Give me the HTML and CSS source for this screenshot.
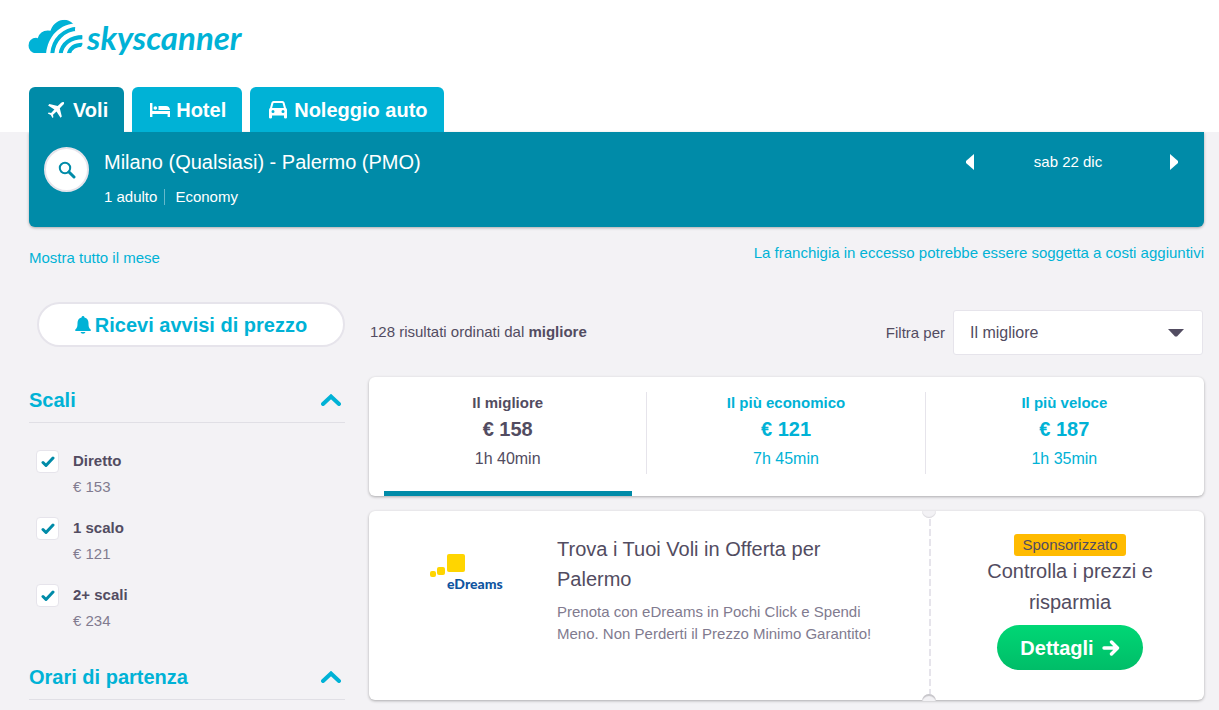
FILE: index.html
```html
<!DOCTYPE html>
<html lang="it">
<head>
<meta charset="utf-8">
<meta name="viewport" content="width=device-width, initial-scale=1">
<title>Skyscanner - Milano - Palermo</title>
<link rel="stylesheet" href="styles.css">
</head>
<body>
<header class="site-header">
  <a class="logo" href="#">
    <svg class="logo-mark" viewBox="26 26 164 104" aria-hidden="true">
      <defs>
        <clipPath id="cloud"><path d="M50 128A23 23 0 0 1 50 82Q53 82 55 83Q62 60 85 60Q90 60 93 61C101 36 121 28 135 28C151 30 160 38 167 47L166 61Q181 65 189 76L188 90L189 101L182 113L188 128Z"/></clipPath>
      </defs>
      <g clip-path="url(#cloud)">
        <path fill="#00b2d6" d="M26 26H190V38C120 33 86 78 80 128H26Z"/>
        <g fill="none" stroke="#00b2d6" stroke-width="12">
          <path d="M98 132C101 88 132 56 176 55"/>
          <path d="M123 132C126 100 153 78 196 80"/>
          <path d="M147 132C152 109 168 101 196 103"/>
        </g>
      </g>
    </svg>
    <span class="logo-text">skyscanner</span>
  </a>
  <nav class="tabs" aria-label="Prodotti">
    <a class="tab tab-active" href="#"><svg class="tab-icon" viewBox="0 0 18 18" aria-hidden="true"><path fill="currentColor" d="M16.800 1.200c.6.6.2 1.800-.6 2.600L12.800 7.200l2 8.300-1.300 1.300-4-6.300-3.500 3.300.4 2.400-.9.900-1.700-3L.8 12.400l.9-.9 2.400.4 3.300-3.500L1.100 4.400l1.300-1.300 8.300 2L14.200 1.800C15 1 16.200.6 16.800 1.200z"/></svg>Voli</a>
    <a class="tab" href="#"><svg class="tab-icon tab-icon-wide" viewBox="0 0 20 18" aria-hidden="true"><path fill="currentColor" d="M0 2h2.400v8H20v6h-2.400v-3H2.400v3H0z"/><path fill="currentColor" d="M8.500 5H16q3.500 0 4 4H8.500z"/><circle cx="5.300" cy="7" r="1.800" fill="currentColor"/></svg>Hotel</a>
    <a class="tab" href="#"><svg class="tab-icon tab-icon-wide" viewBox="0 0 20 18" aria-hidden="true"><path fill="currentColor" fill-rule="evenodd" d="M5.500 0h9q1.500 0 2 1.500l1.500 5.500q1 .5 1 2V16.500q0 1-1.500 1T16 16.500V14.500H4v2q0 1-1.500 1T1 16.500V9q0-1.500 1-2l1.500-5.500Q4 0 5.500 0zM5.500 2 4.100 7h11.800l-1.400-5zM5 9a1.500 1.500 0 1 0 0 3 1.500 1.500 0 0 0 0-3zm10 0a1.500 1.500 0 1 0 0 3 1.500 1.500 0 0 0 0-3z"/></svg>Noleggio auto</a>
  </nav>
</header>

<section class="search-panel">
  <button class="search-button" type="button" aria-label="Modifica ricerca"><svg width="18" height="18" viewBox="0 0 18 18" aria-hidden="true"><circle cx="7" cy="7" r="5.200" fill="none" stroke="#008ba8" stroke-width="2"/><path d="M11 11l5 5" stroke="#008ba8" stroke-width="3" stroke-linecap="round"/></svg></button>
  <div class="search-info">
    <h1 class="route">Milano (Qualsiasi) - Palermo (PMO)</h1>
    <p class="travellers"><span class="pax">1 adulto</span><span>Economy</span></p>
  </div>
  <div class="date-nav">
    <button class="date-arrow" type="button" aria-label="Giorno precedente"><svg width="8" height="16" viewBox="0 0 8 16" aria-hidden="true"><path fill="#fff" d="M8 0v16L0 9V7z"/></svg></button>
    <span class="date">sab 22 dic</span>
    <button class="date-arrow" type="button" aria-label="Giorno successivo"><svg width="8" height="16" viewBox="0 0 8 16" aria-hidden="true"><path fill="#fff" d="M0 0v16l8-7V7z"/></svg></button>
  </div>
</section>

<div class="links-row">
  <a class="month-link" href="#">Mostra tutto il mese</a>
  <a href="#">La franchigia in eccesso potrebbe essere soggetta a costi aggiuntivi</a>
</div>

<div class="columns">
  <aside class="sidebar">
    <button class="alert-button" type="button"><svg width="16" height="18" viewBox="0 0 16 18" aria-hidden="true"><path fill="#00b2d6" d="M8 0q1.300 0 1.500 1.400C12.300 2 13.500 4.500 13.500 7c0 4 .5 5 2.200 6.500V15H.3v-1.500C2 12 2.500 11 2.500 7c0-2.500 1.200-5 4-5.600Q6.700 0 8 0zM5.500 16h5Q10 17.800 8 17.800T5.500 16z"/></svg>Ricevi avvisi di prezzo</button>

    <section class="filter">
      <h2 class="filter-heading"><button class="filter-toggle" type="button">Scali<svg width="20" height="12" viewBox="0 0 20 12" aria-hidden="true"><path d="M2 10l8-7.500L18 10" fill="none" stroke="#00b2d6" stroke-width="4" stroke-linecap="round"/></svg></button></h2>
      <ul class="stops">
        <li class="stop">
          <span class="check"><input class="check-box" id="stop-0" type="checkbox" checked><svg class="check-mark" viewBox="0 0 14 12" aria-hidden="true"><path d="M2 6.500l3 3L12 2" /></svg></span>
          <label class="stop-label" for="stop-0"><strong>Diretto</strong><span class="stop-price">€ 153</span></label>
        </li>
        <li class="stop">
          <span class="check"><input class="check-box" id="stop-1" type="checkbox" checked><svg class="check-mark" viewBox="0 0 14 12" aria-hidden="true"><path d="M2 6.500l3 3L12 2" /></svg></span>
          <label class="stop-label" for="stop-1"><strong>1 scalo</strong><span class="stop-price">€ 121</span></label>
        </li>
        <li class="stop">
          <span class="check"><input class="check-box" id="stop-2" type="checkbox" checked><svg class="check-mark" viewBox="0 0 14 12" aria-hidden="true"><path d="M2 6.500l3 3L12 2" /></svg></span>
          <label class="stop-label" for="stop-2"><strong>2+ scali</strong><span class="stop-price">€ 234</span></label>
        </li>
      </ul>
    </section>
    <section class="filter">
      <h2 class="filter-heading"><button class="filter-toggle" type="button">Orari di partenza<svg width="20" height="12" viewBox="0 0 20 12" aria-hidden="true"><path d="M2 10l8-7.500L18 10" fill="none" stroke="#00b2d6" stroke-width="4" stroke-linecap="round"/></svg></button></h2>
    </section>
  </aside>

  <main class="results">
    <div class="results-bar">
      <p class="count">128 risultati ordinati dal <strong>migliore</strong></p>
      <label class="sort-label" for="sort">Filtra per</label>
      <span class="select-wrap">
        <select class="select" id="sort"><option>Il migliore</option><option>Il più economico</option><option>Il più veloce</option></select>
        <svg class="select-arrow" width="16" height="8" viewBox="0 0 16 8" aria-hidden="true"><path fill="#524c61" d="M0 0h16L9 7.500H7z"/></svg>
      </span>
    </div>

    <div class="card best">
      <button class="best-option best-current" type="button"><span class="best-body"><strong class="best-name">Il migliore</strong><strong class="best-price">€ 158</strong><span class="best-time">1h 40min</span></span></button>
      <button class="best-option" type="button"><span class="best-body"><strong class="best-name">Il più economico</strong><strong class="best-price">€ 121</strong><span class="best-time">7h 45min</span></span></button>
      <button class="best-option" type="button"><span class="best-body"><strong class="best-name">Il più veloce</strong><strong class="best-price">€ 187</strong><span class="best-time">1h 35min</span></span></button>
    </div>

    <article class="card ticket">
      <div class="partner">
        <svg width="36" height="26" viewBox="0 0 36 26" aria-hidden="true"><g fill="#ffd500"><rect x="17" y="1" width="18" height="18" rx="2"/><rect x="7" y="14" width="8" height="8" rx="2"/><rect x="0" y="18" width="6" height="6" rx="2"/></g></svg>
        <span class="partner-name">eDreams</span>
      </div>
      <div class="offer">
        <h3 class="offer-title">Trova i Tuoi Voli in Offerta per Palermo</h3>
        <p class="offer-text">Prenota con eDreams in Pochi Click e Spendi Meno. Non Perderti il Prezzo Minimo Garantito!</p>
      </div>
      <div class="stub">
        <span class="badge">Sponsorizzato</span>
        <p class="stub-text">Controlla i prezzi e risparmia</p>
        <a class="details" href="#">Dettagli<svg width="18" height="16" viewBox="0 0 18 16" aria-hidden="true"><path d="M2 8h13M9.500 2l6 6-6 6" fill="none" stroke="#fff" stroke-width="3.400" stroke-linecap="round" stroke-linejoin="round"/></svg></a>
      </div>
    </article>
  </main>
</div>
</body>
</html>
```

FILE: styles.css
```css
* { box-sizing: border-box; }
body {
  margin: 0;
  padding-bottom: 8px;
  background: #f3f2f5;
  color: #524c61;
  font: 15px/22px "Liberation Sans", Arial, sans-serif;
}
h1, h2, h3, p, ul { margin: 0; padding: 0; font-size: inherit; font-weight: inherit; }
ul { list-style: none; }
a { color: #00b2d6; text-decoration: none; }
button { border: 0; padding: 0; background: none; color: inherit; font: inherit; cursor: pointer; }
svg { display: block; flex: none; }

.site-header { background: #fff; padding: 19px 15px 0 28px; }
.logo { display: flex; align-items: flex-start; height: 40px; gap: 4px; }
.logo-mark { width: 55px; height: 35px; }
.logo-text { font: italic bold 33px/37px Lato, sans-serif; }
.tabs { display: flex; gap: 8px; margin: 28px 0 0 1px; }
.tab {
  display: flex; align-items: center; gap: 6px;
  height: 45px; padding: 0 16px 0 18px;
  border-radius: 6px 6px 0 0;
  background: #00b2d6; color: #fff;
  font-size: 20px; font-weight: bold;
}
.tab-active { background: #008ba8; gap: 8px; }
.tab-icon { width: 18px; height: 18px; }
.tab-icon-wide { width: 20px; }

.search-panel {
  display: flex; align-items: flex-start;
  min-height: 95px; margin: 0 15px 0 29px; padding: 15px;
  border-radius: 0 0 6px 6px;
  background: #008ba8; color: #fff;
  box-shadow: 0 1px 3px rgba(0, 0, 0, .3);
}
.search-button {
  display: grid; place-items: center;
  width: 45px; height: 45px;
  border: 2px solid #e6e4eb; border-radius: 50%;
  background: #fff;
}
.search-info { flex: 1; padding-left: 15px; }
.route { font-size: 20px; line-height: 30px; }
.travellers { display: flex; margin-top: 9px; }
.pax {
  padding-right: 8px; margin-right: 10px;
  background: linear-gradient(#66b9cb, #66b9cb) right center / 1px 16px no-repeat;
}
.date-nav { display: flex; align-items: center; justify-content: space-between; width: 212px; height: 30px; margin-right: 11px; }
.date { padding-right: 8px; }

.links-row { display: flex; justify-content: space-between; margin: 15px 15px 0 29px; }
.month-link { padding-top: 5px; }

.columns { display: flex; gap: 24px; margin: 33px 15px 0 29px; }
.sidebar { flex: 0 0 316px; }
.alert-button {
  display: flex; align-items: center; justify-content: center; gap: 4px;
  width: 308px; height: 45px; margin-left: 8px;
  border: 2px solid #e6e4eb; border-radius: 24px;
  background: #fff; color: #00b2d6;
  font-size: 20px; font-weight: bold;
}
.filter { padding-top: 30px; }
.filter + .filter { padding-top: 26px; }
.filter-heading { border-bottom: 1px solid #e0dfe5; }
.filter-toggle {
  display: flex; align-items: center; justify-content: space-between;
  width: 100%; height: 45px; padding: 0 4px 0 0;
  color: #00b2d6; font-size: 20px; font-weight: bold;
}
.stops { padding-top: 27px; }
.stop { display: flex; gap: 14px; padding: 0 0 23px 7px; }
.stop:last-child { padding-bottom: 0; }
.check { display: grid; width: 23px; height: 23px; }
.check-box {
  grid-area: 1 / 1; appearance: none;
  width: 23px; height: 23px; margin: 0;
  border: 1px solid #e6e4eb; border-radius: 4px; background: #fff;
}
.check-mark {
  grid-area: 1 / 1; place-self: center; width: 14px; height: 12px; pointer-events: none;
  fill: none; stroke: #008ba8; stroke-width: 3; stroke-linecap: round; stroke-linejoin: round;
  visibility: hidden;
}
.check-box:checked + .check-mark { visibility: visible; }
.stop-label { display: flex; flex-direction: column; margin-bottom: -4px; }
.stop-price { color: #817b8f; padding-top: 4px; }

.results { flex: 1; min-width: 0; }
.results-bar { display: flex; align-items: center; margin-top: 8px; padding: 0 1px; }
.count { flex: 1; padding-bottom: 2px; }
.sort-label { margin-right: 8px; }
.select-wrap { display: grid; width: 250px; }
.select {
  grid-area: 1 / 1; appearance: none;
  height: 45px; padding: 0 16px;
  border: 1px solid #e6e4eb; border-radius: 3px;
  background: #fff; color: inherit;
  font: 16px "Liberation Sans", Arial, sans-serif;
}
.select-arrow { grid-area: 1 / 1; place-self: center end; margin-right: 19px; pointer-events: none; }

.card { border-radius: 6px; background: #fff; box-shadow: 0 1px 3px rgba(0, 0, 0, .3); }
.best { display: grid; grid-template-columns: repeat(3, 1fr); margin-top: 22px; }
.best-option { padding-top: 15px; color: #00b2d6; }
.best-option::after { content: ""; display: block; height: 5px; margin: 17px 15px 0; }
.best-current { color: #524c61; }
.best-current::after { background: #008ba8; }
.best-body { display: grid; border-right: 1px solid #e6e4eb; }
.best-option:last-child .best-body { border-color: transparent; }
.best-price { font-size: 20px; line-height: 30px; }
.best-time { font-size: 16px; line-height: 30px; }

.ticket { display: flex; min-height: 189px; margin-top: 15px; position: relative; }
.partner { flex: 0 0 188px; padding: 42px 0 0 61px; }
.partner-name { display: block; margin: -4px 0 0 17px; color: #0f559f; font: 900 14px/18px Lato, sans-serif; }
.offer { flex: 1; padding: 23px 45px 0 0; }
.offer-title { font-size: 20px; line-height: 30px; }
.offer-text { margin-top: 7px; color: #817b8f; }
.stub {
  display: flex; flex-direction: column; align-items: center;
  flex: 0 0 275px; padding: 23px 39px 30px 46px; text-align: center;
  background: repeating-linear-gradient(#e6e4eb 0 7px, #fff 7px 10px) 0 8px / 2px 100% no-repeat;
  border-radius: 6px;
}
.stub::before, .stub::after {
  content: ""; position: absolute; right: 268px; width: 14px; height: 7px; background: #f3f2f5;
}
.stub::before { top: 0; border-radius: 0 0 7px 7px; box-shadow: inset 0 -1px 1px #d9d8dc; }
.stub::after { bottom: -1px; border-radius: 7px 7px 0 0; box-shadow: inset 0 2px 1px #c6c5c9; }
.badge { padding: 0 8px; border-radius: 3px; background: #ffbb00; }
.stub-text { font-size: 20px; line-height: 31px; }
.details {
  display: flex; align-items: center; gap: 8px;
  height: 45px; margin-top: 7px; padding: 0 23px;
  border-radius: 23px;
  background: linear-gradient(#00d775, #00bd68); color: #fff;
  font-size: 20px; font-weight: bold;
}
```
